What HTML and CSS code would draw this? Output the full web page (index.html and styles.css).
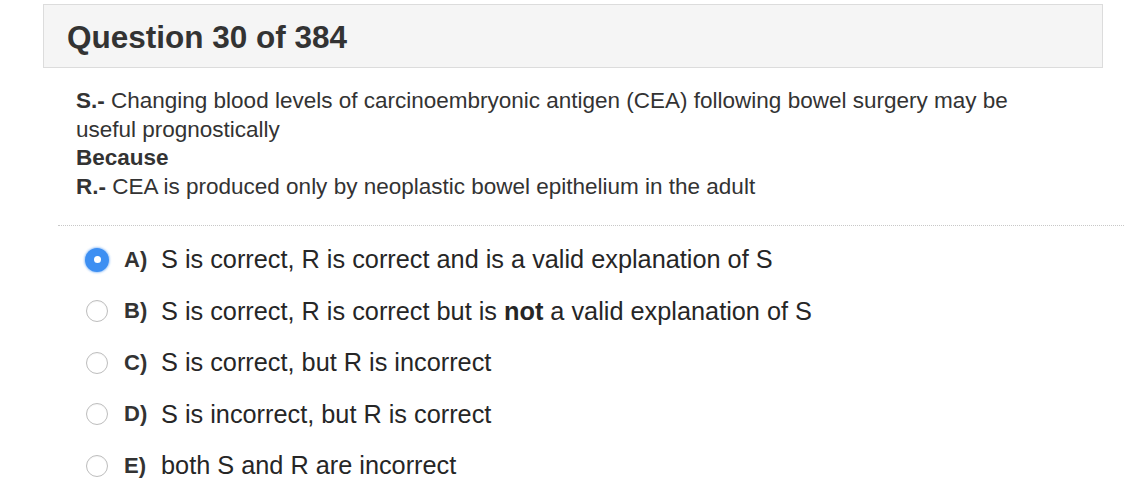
FILE: index.html
```html
<!DOCTYPE html>
<html>
<head>
<meta charset="utf-8">
<link rel="stylesheet" href="styles.css">
</head>
<body>
<div class="page">
  <div class="header"><h1 class="title">Question 30 of 384</h1></div>
  <div class="stem">
    <p class="line"><b>S.-</b> Changing blood levels of carcinoembryonic antigen (CEA) following bowel surgery may be useful prognostically</p>
    <p class="line"><b>Because</b></p>
    <p class="line"><b>R.-</b> CEA is produced only by neoplastic bowel epithelium in the adult</p>
  </div>
  <div class="divider"></div>
  <ul class="options">
    <li class="option"><span class="radio selected"></span><span class="letter">A)</span><span class="text">S is correct, R is correct and is a valid explanation of S</span></li>
    <li class="option"><span class="radio"></span><span class="letter">B)</span><span class="text">S is correct, R is correct but is <b>not</b> a valid explanation of S</span></li>
    <li class="option"><span class="radio"></span><span class="letter">C)</span><span class="text">S is correct, but R is incorrect</span></li>
    <li class="option"><span class="radio"></span><span class="letter">D)</span><span class="text">S is incorrect, but R is correct</span></li>
    <li class="option"><span class="radio"></span><span class="letter">E)</span><span class="text">both S and R are incorrect</span></li>
  </ul>
</div>
</body>
</html>
```
FILE: styles.css
```css
html, body {
  margin: 0;
  padding: 0;
  background: #fff;
}
body {
  font-family: "Liberation Sans", Arial, sans-serif;
  color: #333;
  overflow: hidden;
}
.page {
  padding-top: 4px;
}
.header {
  margin-left: 43px;
  width: 1035px;
  height: 60px;
  background: #f5f5f5;
  border: 1px solid #dcdcdc;
  display: flex;
  align-items: center;
  padding: 2px 0 0 23px;
  box-sizing: content-box;
}
.title {
  margin: 0;
  font-size: 31.5px;
  font-weight: bold;
  color: #333;
}
.stem {
  margin: 19px 0 0 76px;
  width: 960px;
}
.line {
  margin: 0;
  font-size: 22.5px;
  line-height: 28.5px;
  color: #333;
}
.divider {
  margin: 24px 0 0 58px;
  border-top: 1px dotted #c8c8c8;
}
.options {
  list-style: none;
  margin: 8px 0 0 0;
  padding: 0 0 0 86px;
}
.option {
  display: flex;
  align-items: center;
  height: 51.5px;
  font-size: 25.3px;
}
.radio {
  width: 22px;
  height: 22px;
  border-radius: 50%;
  border: 1px solid #bdbdbd;
  background: #fff;
  box-sizing: border-box;
  flex: none;
  position: relative;
  box-shadow: inset 0 1px 1px rgba(0, 0, 0, 0.04);
}
.radio.selected {
  width: 24px;
  height: 24px;
  margin-left: -1px;
  margin-right: -1px;
  border: none;
  background: #3d8ff2;
  box-shadow: 0 0 2px 1px rgba(61, 143, 242, 0.45);
}
.radio.selected::after {
  content: "";
  position: absolute;
  left: 50%;
  top: 50%;
  width: 7px;
  height: 7px;
  margin: -3.5px 0 0 -3.5px;
  border-radius: 50%;
  background: #fff;
}
.letter {
  margin-left: 16px;
  font-weight: bold;
  font-size: 22px;
  width: 37px;
  flex: none;
}
.text {
  color: #262626;
}
```
